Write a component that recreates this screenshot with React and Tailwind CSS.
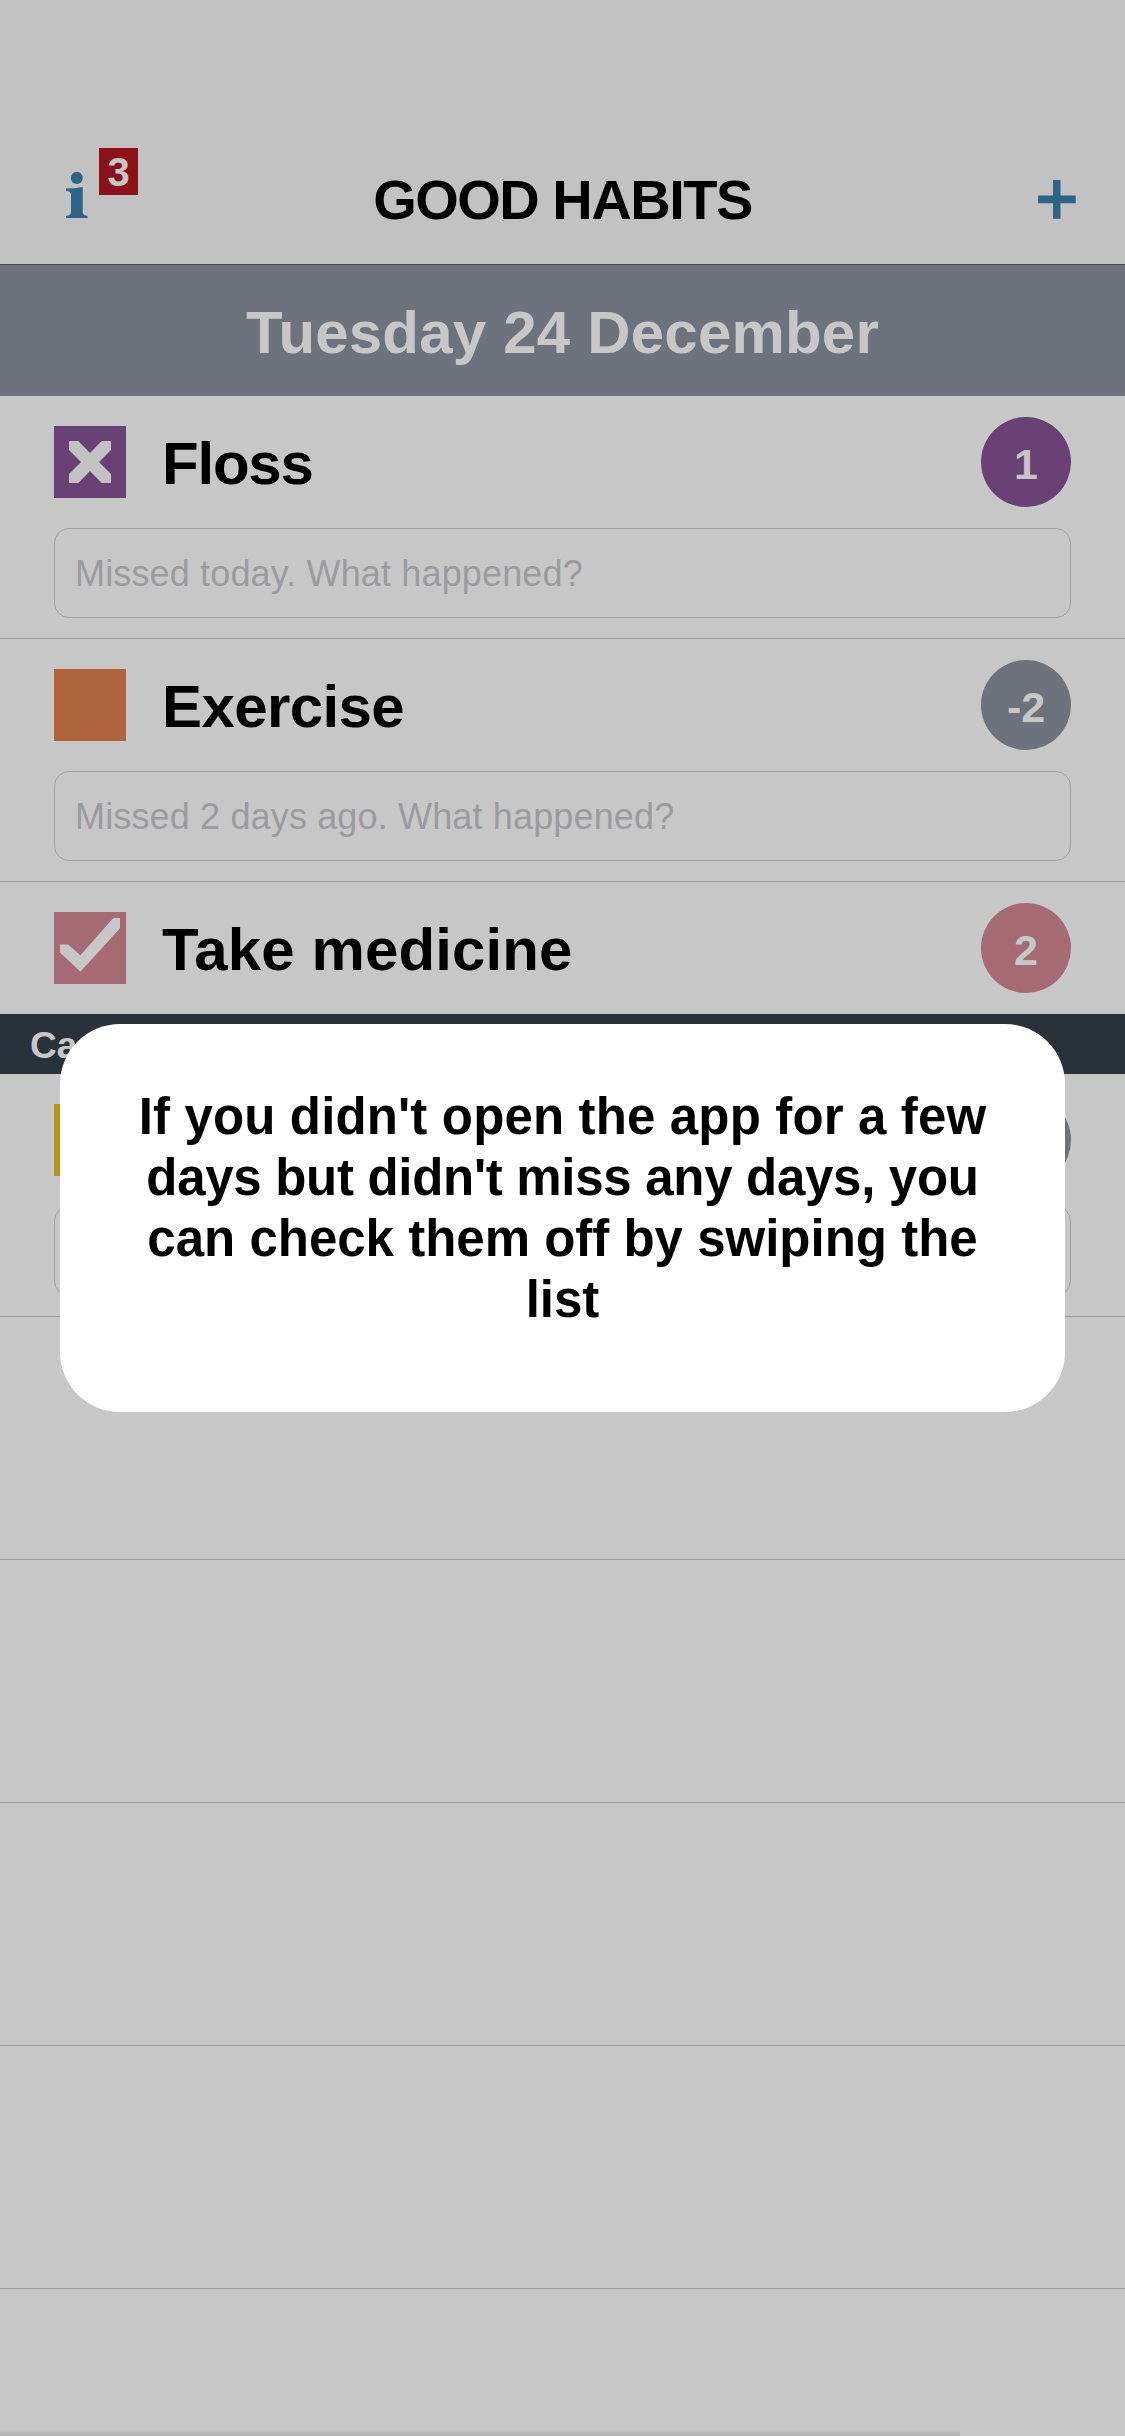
function Cross() {
  return (
    <svg className="size-[72px]" viewBox="0 0 72 72" fill="#c2c2c2">
      <path d="M15 15H24.300L36 27L47.700 15H57V24L45 36L57 48V57H47.700L36 45L24.300 57H15V48L27 36L15 24Z" />
    </svg>
  );
}

function Tick() {
  return (
    <svg className="size-[72px]" viewBox="0 0 72 72" fill="#c7c7c7">
      <path d="M6 32.500H14L26.400 43.300L59.300 6H66V16.300L26.400 59.700L6 40.500Z" />
    </svg>
  );
}

function InfoIcon() {
  return (
    <svg className="h-[46px] w-[22px]" viewBox="0 0 22 46" fill="#2d6485">
      <circle cx="10.800" cy="5.900" r="6" />
      <path d="M0 16.600Q9 16.600 16.700 15V40.500Q17 43.300 21.600 44V46H0V44Q4.800 43.300 5 40.500V22.500Q5 19.500 0 18.800Z" />
    </svg>
  );
}

function PlusIcon() {
  return (
    <svg className="h-[39px] w-[38px]" viewBox="0 0 38 39" fill="#2d6485">
      <path d="M15 0H22.500V15.600H37.700V23.200H22.500V38.800H15V23.200H0V15.600H15Z" />
    </svg>
  );
}

function HabitTop({ name, count, box, circle, icon, tracking = "" }) {
  return (
    <div className="flex h-[132px] shrink-0 items-center px-[54px]">
      <div className={`size-[72px] shrink-0 ${box}`}>{icon}</div>
      <div
        className={`flex-1 pt-[3px] pl-[36px] text-[60px] leading-[72px] font-bold whitespace-nowrap text-black ${tracking}`}
      >
        {name}
      </div>
      <div
        className={`flex size-[90px] shrink-0 items-center justify-center rounded-full pt-[4px] text-[43px] leading-[48px] font-bold text-[#c7c7c7] ${circle}`}
      >
        {count}
      </div>
    </div>
  );
}

function HabitRow({ note, ...top }) {
  return (
    <div className="h-[243px] border-b border-[#9c9c9e]">
      <HabitTop {...top} />
      <div className="mx-[54px] flex h-[90px] items-center rounded-[15px] border border-[#a0a0a0] px-[20px] pt-[2px] text-[36px] leading-[42px] tracking-[0.15px] text-[#9b9b9f]">
        {note}
      </div>
    </div>
  );
}

export default function App() {
  return (
    <div className="relative flex h-[2436px] w-[1125px] flex-col overflow-hidden bg-[#c7c7c7] font-['Liberation_Sans',Arial,sans-serif]">
      <header className="grid h-[265px] shrink-0 grid-cols-3 border-b border-[#454c54] bg-[#c2c2c2] pt-[132px]">
        <div className="flex items-start pl-[66px]">
          <div className="pt-[40px]">
            <InfoIcon />
          </div>
          <div className="mt-[16px] ml-[11px] flex h-[47px] w-[39px] items-center justify-center bg-[#8b111b] pt-[2px] text-[40px] leading-[45px] font-bold text-[#c7c7c7]">
            3
          </div>
        </div>
        <h1 className="flex justify-center pt-[36px] text-[56px] leading-[64px] font-bold tracking-[-1.5px] whitespace-nowrap text-black">
          GOOD HABITS
        </h1>
        <div className="flex justify-end pt-[48px] pr-[49px]">
          <PlusIcon />
        </div>
      </header>
      <div className="flex h-[131px] shrink-0 items-center justify-center bg-[#6c737c] pt-[4px] text-[60px] leading-[72px] font-bold tracking-[0.2px] text-[#c7c7c7]">
        Tuesday 24 December
      </div>
      <main>
        <HabitRow
          name="Floss"
          count="1"
          box="bg-[#6a4175]"
          circle="bg-[#6a4175]"
          tracking="tracking-[-1.2px]"
          icon={<Cross />}
          note="Missed today. What happened?"
        />
        <HabitRow
          name="Exercise"
          count="-2"
          box="bg-[#b0643c]"
          circle="bg-[#6c737c]"
          tracking="tracking-[-0.6px]"
          note="Missed 2 days ago. What happened?"
        />
        <HabitTop
          name="Take medicine"
          count="2"
          box="bg-[#a56a74]"
          circle="bg-[#a56a74]"
          tracking="tracking-[0.1px]"
          icon={<Tick />}
        />
        <div className="flex h-[60px] items-center bg-[#29313a] px-[30px] pt-[4px] text-[37px] leading-[44px] font-bold text-[#c7c7c7]">
          Ca
        </div>
        <HabitRow name="" count="" box="bg-[#b8961d]" circle="bg-[#6c737c]" note="" />
        <div className="h-[243px] border-b border-[#9c9c9e]" />
        <div className="h-[243px] border-b border-[#9c9c9e]" />
        <div className="h-[243px] border-b border-[#9c9c9e]" />
        <div className="h-[243px] border-b border-[#9c9c9e]" />
      </main>
      <div className="absolute bottom-0 left-0 h-[6px] w-[960px] bg-linear-to-b from-[#c4c4c4] to-[#b0b0b0]" />
      <div className="absolute top-[1024px] left-[60px] flex h-[388px] w-[1005px] flex-col items-center rounded-[60px] bg-white pt-[62px] text-[51px] leading-[61px] font-bold whitespace-nowrap text-black">
        <div className="tracking-[0.15px]">If you didn't open the app for a few</div>
        <div className="tracking-[-0.3px]">days but didn't miss any days, you</div>
        <div>can check them off by swiping the</div>
        <div>list</div>
      </div>
    </div>
  );
}
